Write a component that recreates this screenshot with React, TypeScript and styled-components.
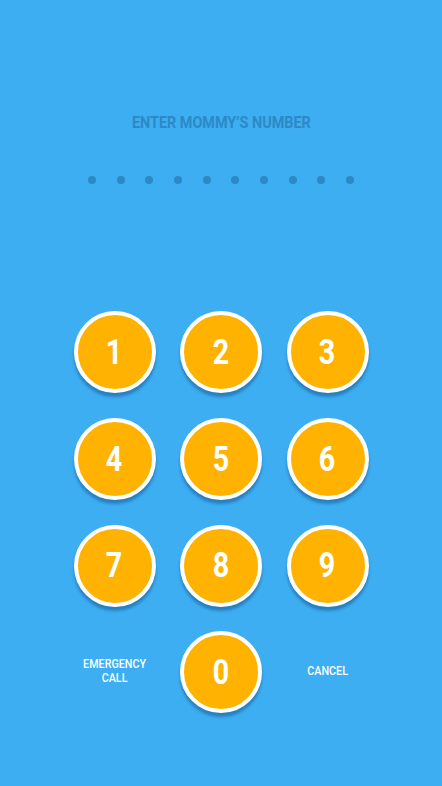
import React from "react";
import styled, { createGlobalStyle } from "styled-components";

const Global = createGlobalStyle`
  html, body { margin: 0; padding: 0; }
  body { background: #3daef2; font-family: Roboto, "Noto Sans", sans-serif; }
  #root { min-height: 786px; }
`;

const Screen = styled.div`
  width: 442px;
  height: 786px;
  background: #3daef2;
  display: flex;
  flex-direction: column;
  align-items: center;
  box-sizing: border-box;
  padding-top: 113px;
`;

const Title = styled.div`
  color: #2c89c6;
  font-family: Roboto, sans-serif;
  font-weight: 700;
  font-size: 16px;
  line-height: 20px;
  letter-spacing: 0;
  transform: scaleX(0.9);
  white-space: nowrap;
`;

const Dots = styled.div`
  display: flex;
  gap: 20.7px;
  margin-top: 43px;
`;

const Dot = styled.span`
  width: 8px;
  height: 8px;
  border-radius: 50%;
  background: #2c89c6;
`;

const Pad = styled.div`
  display: grid;
  grid-template-columns: repeat(3, 106.5px);
  grid-auto-rows: 106.7px;
  margin-top: 115px;
`;

const Cell = styled.div`
  display: flex;
  align-items: center;
  justify-content: center;
`;

const Key = styled.button`
  width: 82px;
  height: 82px;
  border-radius: 50%;
  border: 4px solid #ffffff;
  background: #ffb300;
  box-sizing: border-box;
  box-shadow: 0 4px 3px rgba(10, 70, 130, 0.45);
  display: flex;
  align-items: center;
  justify-content: center;
  padding: 0;
  cursor: pointer;
`;

const Digit = styled.span`
  color: #ffffff;
  font-family: Roboto, sans-serif;
  font-weight: 700;
  font-size: 35px;
  line-height: 1;
  transform: scaleX(0.82);
  display: inline-block;
`;

const Action = styled.span`
  color: #ffffff;
  font-family: Roboto, sans-serif;
  font-weight: 500;
  font-size: 12.5px;
  line-height: 14px;
  text-align: center;
  transform: scaleX(0.86);
  display: inline-block;
  margin-top: -2px;
`;

const digits = ["1", "2", "3", "4", "5", "6", "7", "8", "9"];

export default function App() {
  return (
    <>
      <Global />
      <Screen>
        <Title>ENTER MOMMY’S NUMBER</Title>
        <Dots>
          {Array.from({ length: 10 }).map((_, i) => (
            <Dot key={i} />
          ))}
        </Dots>
        <Pad>
          {digits.map((d) => (
            <Cell key={d}>
              <Key>
                <Digit>{d}</Digit>
              </Key>
            </Cell>
          ))}
          <Cell>
            <Action>
              EMERGENCY
              <br />
              CALL
            </Action>
          </Cell>
          <Cell>
            <Key>
              <Digit>0</Digit>
            </Key>
          </Cell>
          <Cell>
            <Action>CANCEL</Action>
          </Cell>
        </Pad>
      </Screen>
    </>
  );
}
